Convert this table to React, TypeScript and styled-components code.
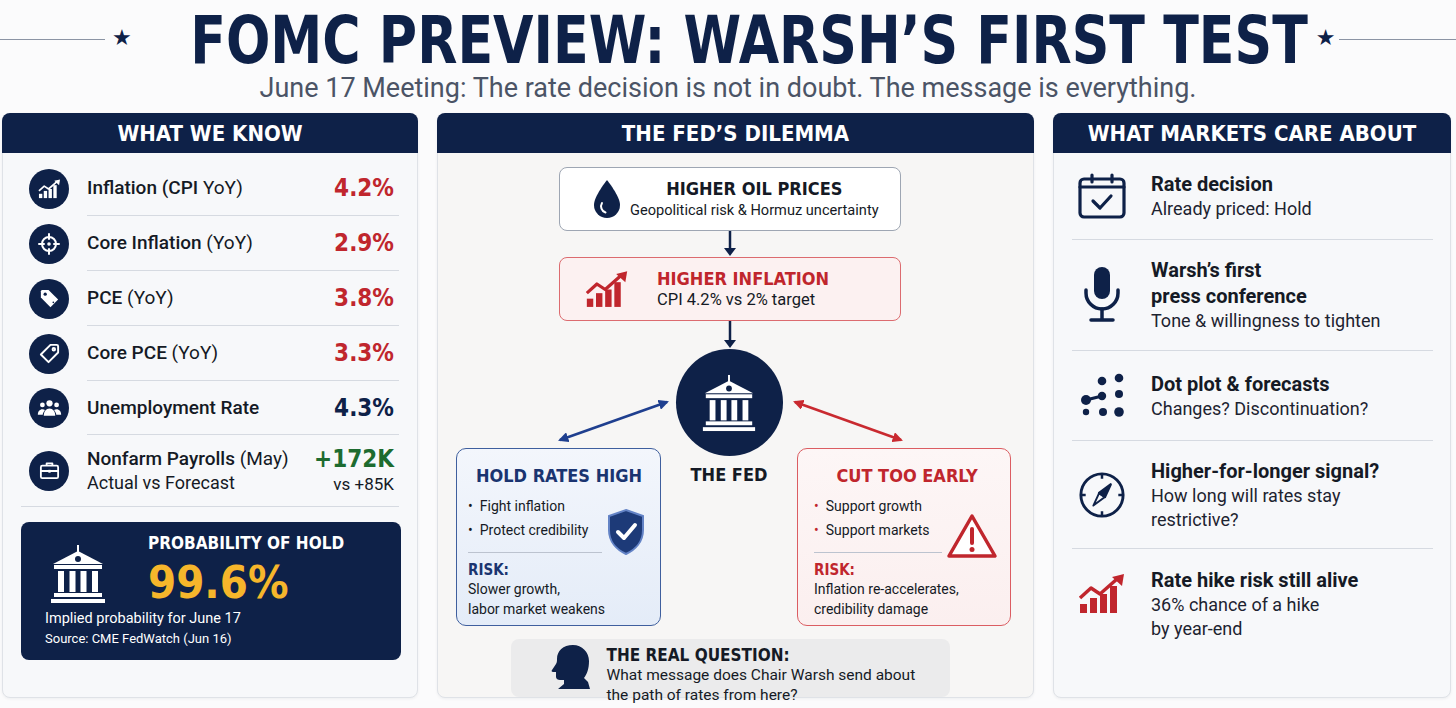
import React from "react";
import styled, { createGlobalStyle } from "styled-components";

const NAVY = "#0e2148";
const RED = "#c0262d";
const GREEN = "#1d6b2f";
const YELLOW = "#f6b62b";
const INK = "#151a25";
const LINE = "#d6dae1";
const HEAD = `"DejaVu Sans Condensed", "DejaVu Sans", sans-serif`;

const GlobalStyle = createGlobalStyle`
    html, body { margin: 0; padding: 0; background: #fbfbfc; }
    #root { width: 1456px; height: 708px; overflow: hidden; }
    * { box-sizing: border-box; }
`;

const Page = styled.div`
    width: 1456px;
    height: 708px;
    display: flex;
    flex-direction: column;
    font-family: Roboto, "Noto Sans", sans-serif;
    color: ${INK};
`;

/* ---------- masthead ---------- */

const Masthead = styled.header`
    height: 75px;
    display: flex;
    align-items: center;
`;

const Rule = styled.div<{ $w?: number }>`
    height: 1.5px;
    background: #8b94a4;
    ${({ $w }) => ($w ? `width: ${$w}px;` : "flex: 1;")}
    margin-top: 4px;
`;

const Star = styled.span<{ $gap: number }>`
    color: ${NAVY};
    font-family: "DejaVu Sans", sans-serif;
    font-size: 22px;
    line-height: 1;
    margin: 0 ${({ $gap }) => $gap}px 0 7px;
`;

const TitleBox = styled.div`
    width: 1120px;
    display: flex;
    justify-content: center;
    padding-top: 7px;
`;

const Title = styled.h1`
    margin: 0;
    font-family: ${HEAD};
    font-weight: 700;
    font-size: 66px;
    line-height: 1;
    color: ${NAVY};
    white-space: nowrap;
    transform: scaleX(0.88);
`;

const Subtitle = styled.p`
    margin: 0;
    text-align: center;
    font-size: 27px;
    line-height: 26px;
    color: #4b5466;
`;

/* ---------- panels ---------- */

const Columns = styled.main`
    margin-top: 12px;
    padding-left: 2px;
    display: grid;
    grid-template-columns: 416px 597px 398px;
    column-gap: 19px;
    height: 582px;
`;

const Panel = styled.section<{ $bg: string }>`
    border: 1px solid #dfe2e7;
    border-radius: 8px;
    background: ${({ $bg }) => $bg};
    display: flex;
    flex-direction: column;
    box-shadow: 0 1px 3px rgba(20, 30, 50, 0.06);
`;

const PanelHeader = styled.h2`
    margin: -1px -1px 0;
    height: 40px;
    border-radius: 8px 8px 0 0;
    background: ${NAVY};
    color: #fff;
    font-family: ${HEAD};
    font-weight: 700;
    font-size: 22px;
    display: flex;
    align-items: center;
    justify-content: center;
    flex-shrink: 0;
`;

/* ---------- left: what we know ---------- */

const StatList = styled.div`
    padding: 8px 18px 0 26px;
    display: flex;
    flex-direction: column;
`;

const StatRow = styled.div`
    display: flex;
    align-items: center;
    gap: 18px;
`;

const Disc = styled.div`
    width: 40px;
    height: 40px;
    border-radius: 50%;
    background: ${NAVY};
    display: flex;
    align-items: center;
    justify-content: center;
    flex-shrink: 0;
`;

const StatBody = styled.div<{ $h: number; $ruled: boolean }>`
    flex: 1;
    height: ${({ $h }) => $h}px;
    display: flex;
    align-items: center;
    justify-content: space-between;
    padding-right: 5px;
    border-bottom: ${({ $ruled }) => ($ruled ? `1px solid ${LINE}` : "none")};
`;

const StatLabel = styled.div`
    font-size: 19px;
    font-weight: 500;
    line-height: 24px;
    span { font-weight: 400; }
`;

const StatNote = styled.div`
    font-size: 18px;
    line-height: 24px;
`;

const StatValue = styled.div<{ $c: string }>`
    font-family: ${HEAD};
    font-weight: 700;
    font-size: 24px;
    line-height: 26px;
    color: ${({ $c }) => $c};
    text-align: right;
`;

const ValueNote = styled.div`
    font-size: 17px;
    line-height: 24px;
    text-align: right;
`;

const FullDivider = styled.div`
    height: 1px;
    background: ${LINE};
    margin-left: -8px;
`;

const ProbBox = styled.div`
    margin: 15px -2px 0 -8px;
    height: 138px;
    border-radius: 8px;
    background: ${NAVY};
    color: #fff;
`;

const ProbTop = styled.div`
    display: flex;
    padding: 11px 0 0 27px;
    gap: 40px;
`;

const ProbIcon = styled.div`
    margin-top: 11px;
`;

const ProbTitle = styled.div`
    font-family: ${HEAD};
    font-weight: 700;
    font-size: 17px;
    line-height: 20px;
`;

const ProbFigure = styled.div`
    margin-top: 4px;
    font-family: ${HEAD};
    font-weight: 700;
    font-size: 45px;
    line-height: 52px;
    color: ${YELLOW};
`;

const ProbFoot = styled.div<{ $size: number }>`
    padding-left: 24px;
    font-size: ${({ $size }) => $size}px;
    line-height: 20px;
    &:first-of-type { margin-top: 3px; }
`;

/* ---------- middle: dilemma ---------- */

const Dilemma = styled.div`
    padding: 14px 11px 0 0;
    display: flex;
    flex-direction: column;
    align-items: center;
`;

const FlowBox = styled.div<{ $tone: "plain" | "alert" }>`
    width: 342px;
    height: 64px;
    border-radius: 8px;
    display: flex;
    align-items: center;
    border: 1.5px solid ${({ $tone }) => ($tone === "alert" ? "#dc6b6f" : "#9ea6b3")};
    background: ${({ $tone }) => ($tone === "alert" ? "#fcf1f1" : "#fff")};
    padding-left: ${({ $tone }) => ($tone === "alert" ? 25 : 32)}px;
    gap: ${({ $tone }) => ($tone === "alert" ? 28 : 8)}px;
`;

const FlowText = styled.div<{ $align: string }>`
    text-align: ${({ $align }) => $align};
`;

const FlowTitle = styled.div<{ $c: string }>`
    font-family: ${HEAD};
    font-weight: 700;
    font-size: 18px;
    line-height: 22px;
    color: ${({ $c }) => $c};
`;

const FlowSub = styled.div<{ $size: number }>`
    font-size: ${({ $size }) => $size}px;
    line-height: 20px;
`;

const FedRow = styled.div`
    position: relative;
    width: calc(100% + 11px);
    margin-right: -11px;
    display: grid;
    grid-template-columns: 205px 1fr 214px;
    padding: 0 22px 0 18px;
    align-items: start;
`;

const ArrowLayer = styled.svg`
    position: absolute;
    left: 0;
    top: 0;
    pointer-events: none;
`;

const FedCenter = styled.div`
    display: flex;
    flex-direction: column;
    align-items: center;
`;

const FedSeal = styled.div`
    width: 107px;
    height: 107px;
    border-radius: 50%;
    background: ${NAVY};
    display: flex;
    align-items: center;
    justify-content: center;
`;

const FedLabel = styled.div`
    margin-top: 9px;
    font-family: ${HEAD};
    font-weight: 700;
    font-size: 18px;
    line-height: 20px;
    color: ${INK};
`;

const Scenario = styled.div<{ $tone: "hold" | "cut" }>`
    margin-top: 99px;
    height: 178px;
    border-radius: 10px;
    border: 1.5px solid ${({ $tone }) => ($tone === "hold" ? "#3f5f9e" : "#db5d62")};
    background: ${({ $tone }) =>
        $tone === "hold" ? "linear-gradient(180deg, #f3f6fc, #e4ecf8)" : "linear-gradient(180deg, #fdf6f6, #fbefef)"};
    padding: 16px 10px 0 ${({ $tone }) => ($tone === "hold" ? 11 : 16)}px;
`;

const ScenarioTitle = styled.div<{ $c: string }>`
    font-family: ${HEAD};
    font-weight: 700;
    font-size: 18px;
    line-height: 22px;
    text-align: center;
    color: ${({ $c }) => $c};
`;

const ScenarioGrid = styled.div<{ $icon: number }>`
    margin-top: 7px;
    display: grid;
    grid-template-columns: 1fr ${({ $icon }) => $icon}px;
    column-gap: 4px;
`;

const Bullets = styled.ul`
    margin: 0;
    padding: 0;
    list-style: none;
    grid-column: 1;
`;

const Bullet = styled.li<{ $dot: string }>`
    font-size: 14px;
    line-height: 24px;
    &::before {
        content: "•";
        color: ${({ $dot }) => $dot};
        margin-right: 7px;
    }
`;

const ScenarioRule = styled.div`
    grid-column: 1;
    height: 1px;
    background: #bcc3cf;
    margin: 10px 0 8px;
`;

const RiskLabel = styled.div<{ $c: string }>`
    grid-column: 1;
    font-family: ${HEAD};
    font-weight: 700;
    font-size: 15px;
    line-height: 18px;
    color: ${({ $c }) => $c};
`;

const RiskText = styled.div`
    grid-column: 1 / 3;
    font-size: 14px;
    line-height: 20px;
`;

const ScenarioIcon = styled.div<{ $top: number }>`
    grid-column: 2;
    grid-row: 1 / span 3;
    align-self: start;
    margin-top: ${({ $top }) => $top}px;
`;

const Question = styled.div`
    margin-top: 13px;
    width: 439px;
    height: 58px;
    border-radius: 8px;
    background: #ebebec;
    display: flex;
    align-items: flex-start;
    padding-left: 37px;
    gap: 15px;
`;

const QuestionHead = styled.div`
    margin-top: 5px;
`;

const QuestionText = styled.div`
    padding-top: 6px;
`;

const QuestionTitle = styled.div`
    font-family: ${HEAD};
    font-weight: 700;
    font-size: 17px;
    line-height: 20px;
`;

const QuestionBody = styled.div`
    font-size: 15.5px;
    line-height: 20px;
`;

/* ---------- right: markets ---------- */

const MarketList = styled.div`
    padding: 0 17px 0 18px;
    display: flex;
    flex-direction: column;
`;

const MarketItem = styled.div<{ $h?: number }>`
    display: flex;
    gap: 25px;
    padding-left: 6px;
    ${({ $h }) =>
        $h
            ? `height: ${$h}px; align-items: center; border-bottom: 1px solid ${LINE};`
            : "align-items: flex-start; padding-top: 18px;"}
`;

const MarketIcon = styled.div<{ $top?: number }>`
    width: 48px;
    display: flex;
    justify-content: center;
    flex-shrink: 0;
    margin-top: ${({ $top }) => $top || 0}px;
`;

const MarketTitle = styled.div`
    font-size: 20px;
    font-weight: 700;
    line-height: 26px;
`;

const MarketSub = styled.div`
    font-size: 18px;
    line-height: 24px;
    color: #1d2330;
`;

/* ---------- drawings ---------- */

const ChartIcon = ({ color, w, h }: { color: string; w: number; h: number }) => (
    <svg width={w} height={h} viewBox="0 0 48 40">
        <rect x="2" y="30" width="7" height="9" fill={color} />
        <rect x="12" y="24" width="7" height="15" fill={color} />
        <rect x="22" y="20" width="7" height="19" fill={color} />
        <rect x="32" y="12" width="7" height="27" fill={color} />
        <polyline points="2,24 13,14 22,20 39,5" fill="none" stroke={color} strokeWidth="3.5" strokeLinejoin="round" />
        <polygon points="46,0 44,12 34,3" fill={color} />
    </svg>
);

const BankIcon = ({ size, hole }: { size: number; hole: string }) => (
    <svg width={size} height={size} viewBox="0 0 60 60">
        <rect x="29" y="1" width="2" height="7" fill="#fff" />
        <polygon points="30,7 5,20 55,20" fill="#fff" />
        <circle cx="30" cy="15" r="3" fill={hole} />
        <rect x="6" y="21" width="48" height="4" fill="#fff" />
        <rect x="10" y="27" width="6" height="21" fill="#fff" />
        <rect x="21.5" y="27" width="6" height="21" fill="#fff" />
        <rect x="32.5" y="27" width="6" height="21" fill="#fff" />
        <rect x="44" y="27" width="6" height="21" fill="#fff" />
        <rect x="6" y="49" width="48" height="4" fill="#fff" />
        <rect x="3" y="55" width="54" height="4" fill="#fff" />
    </svg>
);

const CrossIcon = () => (
    <svg width="24" height="24" viewBox="0 0 24 24" fill="none" stroke="#fff" strokeWidth="2" strokeLinecap="round">
        <circle cx="12" cy="12" r="7" />
        <path d="M12 2v5M12 17v5M2 12h5M17 12h5" />
        <circle cx="12" cy="12" r="0.8" fill="#fff" />
    </svg>
);

const TagFilledIcon = () => (
    <svg width="23" height="23" viewBox="0 0 24 24">
        <path d="M3 4.5C3 3.7 3.7 3 4.5 3H11L21 13L13 21L3 11Z" fill="#fff" />
        <circle cx="7.5" cy="7.5" r="1.7" fill={NAVY} />
        <circle cx="16" cy="16" r="0.9" fill={NAVY} />
    </svg>
);

const TagOutlineIcon = () => (
    <svg width="23" height="23" viewBox="0 0 24 24" fill="none" stroke="#fff" strokeWidth="2" strokeLinejoin="round">
        <path d="M21 4.5V11L11 21L3 13L13 3H19.5C20.3 3 21 3.7 21 4.5Z" />
        <circle cx="16.5" cy="7.5" r="1.3" />
    </svg>
);

const PeopleIcon = () => (
    <svg width="25" height="25" viewBox="0 0 24 24" fill="#fff">
        <circle cx="12" cy="7" r="3" />
        <path d="M6.5 19C6.5 14.8 8.8 12 12 12S17.5 14.8 17.5 19Z" />
        <circle cx="5.2" cy="8.6" r="2.3" />
        <path d="M0.8 18C0.8 15 2.6 12.8 5.2 12.8C6.2 12.8 7 13.1 7.6 13.5C6.4 15 5.6 16.6 5.5 18Z" />
        <circle cx="18.8" cy="8.6" r="2.3" />
        <path d="M23.2 18C23.2 15 21.4 12.8 18.8 12.8C17.8 12.8 17 13.1 16.4 13.5C17.6 15 18.4 16.6 18.5 18Z" />
    </svg>
);

const CaseIcon = () => (
    <svg width="23" height="23" viewBox="0 0 24 24" fill="none" stroke="#fff" strokeWidth="1.9" strokeLinejoin="round">
        <rect x="3" y="7" width="18" height="13" rx="1.5" />
        <path d="M9 7V4.5H15V7M3 12.5H21" />
        <rect x="10.8" y="11.3" width="2.4" height="3" fill="#fff" stroke="none" />
    </svg>
);

const DropIcon = () => (
    <svg width="30" height="40" viewBox="0 0 30 40">
        <path d="M15 1C15 1 2 17 2 26A13 13 0 0 0 28 26C28 17 15 1 15 1Z" fill={NAVY} />
        <path d="M10 24A6.5 6.5 0 0 0 13.5 33.5" fill="none" stroke="#fff" strokeWidth="2" strokeLinecap="round" />
    </svg>
);

const DownArrow = ({ h }: { h: number }) => (
    <svg width="14" height={h} viewBox={`0 0 14 ${h}`}>
        <line x1="7" y1="0" x2="7" y2={h - 7} stroke={NAVY} strokeWidth="2.5" />
        <polygon points={`1,${h - 9} 13,${h - 9} 7,${h - 1}`} fill={NAVY} />
    </svg>
);

const ShieldIcon = () => (
    <svg width="40" height="48" viewBox="0 0 40 48">
        <path d="M20 2L37 8V22C37 34 29 42 20 46C11 42 3 34 3 22V8Z" fill="#1d3a78" stroke="#6383c6" strokeWidth="2" />
        <polyline points="12,24 18,30 29,17" fill="none" stroke="#fff" strokeWidth="4" strokeLinecap="round" strokeLinejoin="round" />
    </svg>
);

const WarnIcon = () => (
    <svg width="52" height="46" viewBox="0 0 52 46">
        <path d="M26 3L49 43H3Z" fill="#fff" stroke={RED} strokeWidth="3.5" strokeLinejoin="round" />
        <line x1="26" y1="16" x2="26" y2="30" stroke={RED} strokeWidth="4" strokeLinecap="round" />
        <circle cx="26" cy="36.5" r="2.5" fill={RED} />
    </svg>
);

const HeadIcon = () => (
    <svg width="44" height="46" viewBox="0 0 44 46">
        <path
            d="M25 1C15 1 9 7 9 15C9 17 9 18 8 20L4 26C3 27 4 28 5 28L8 28L8 33C8 35 10 36 12 36L16 36L16 40L10 45H42L40 38L36 34C39 30 41 25 41 17C41 8 34 1 25 1Z"
            fill={NAVY}
        />
    </svg>
);

const CalendarIcon = () => (
    <svg width="48" height="46" viewBox="0 0 48 46" fill="none" stroke={NAVY} strokeWidth="3.2" strokeLinecap="round" strokeLinejoin="round">
        <rect x="2" y="6" width="44" height="38" rx="4" />
        <path d="M2 14H46" />
        <path d="M14 2V9M34 2V9" />
        <polyline points="15,28 22,35 33,23" />
    </svg>
);

const MicIcon = () => (
    <svg width="40" height="58" viewBox="0 0 40 58" fill="none" stroke={NAVY} strokeWidth="3.5" strokeLinecap="round">
        <rect x="12" y="1" width="16" height="32" rx="8" fill={NAVY} stroke="none" />
        <path d="M4 24V27A16 16 0 0 0 36 27V24" />
        <path d="M20 43V53M9 54H31" />
    </svg>
);

const DotsIcon = () => (
    <svg width="48" height="46" viewBox="0 0 48 46" fill={NAVY}>
        <line x1="8" y1="27" x2="24" y2="23" stroke={NAVY} strokeWidth="3" />
        <circle cx="24" cy="8" r="4.3" />
        <circle cx="41" cy="5" r="4.3" />
        <circle cx="41" cy="21" r="4" />
        <circle cx="41" cy="39" r="4.8" />
        <circle cx="25" cy="39" r="4" />
        <circle cx="8" cy="39" r="3.2" />
        <circle cx="8" cy="27" r="5" />
        <circle cx="24" cy="23" r="4.2" />
    </svg>
);

const CompassIcon = () => (
    <svg width="50" height="50" viewBox="0 0 50 50" fill="none" stroke={NAVY} strokeWidth="2.6" strokeLinejoin="round">
        <circle cx="25" cy="25" r="22" strokeWidth="3" />
        <path d="M25 3V8M25 42V47M3 25H8M42 25H47" />
        <polygon points="34,14 28,27 22,23" fill={NAVY} />
        <polygon points="28,27 16,36 22,23" strokeWidth="2" />
    </svg>
);

/* ---------- data ---------- */

const stats = [
    { icon: <ChartIcon color="#fff" w={23} h={20} />, label: "Inflation (CPI", note: " YoY)", value: "4.2%", color: RED },
    { icon: <CrossIcon />, label: "Core Inflation", note: " (YoY)", value: "2.9%", color: RED },
    { icon: <TagFilledIcon />, label: "PCE", note: " (YoY)", value: "3.8%", color: RED },
    { icon: <TagOutlineIcon />, label: "Core PCE", note: " (YoY)", value: "3.3%", color: RED },
    { icon: <PeopleIcon />, label: "Unemployment Rate", note: "", value: "4.3%", color: NAVY },
];

const rowHeights = [55, 55, 55, 55, 54];

const markets = [
    { icon: <CalendarIcon />, title: ["Rate decision"], sub: ["Already priced: Hold"], h: 87 },
    { icon: <MicIcon />, title: ["Warsh’s first", "press conference"], sub: ["Tone & willingness to tighten"], h: 111 },
    { icon: <DotsIcon />, title: ["Dot plot & forecasts"], sub: ["Changes? Discontinuation?"], h: 90 },
    { icon: <CompassIcon />, title: ["Higher-for-longer signal?"], sub: ["How long will rates stay", "restrictive?"], h: 108 },
];

export default function App() {
    return (
        <Page>
            <GlobalStyle />
            <Masthead>
                <Rule $w={105} />
                <Star $gap={57}>★</Star>
                <TitleBox>
                    <Title>FOMC PREVIEW: WARSH’S FIRST TEST</Title>
                </TitleBox>
                <Star $gap={4}>★</Star>
                <Rule />
            </Masthead>
            <Subtitle>June 17 Meeting: The rate decision is not in doubt. The message is everything.</Subtitle>

            <Columns>
                <Panel $bg="#f7f8fa">
                    <PanelHeader>WHAT WE KNOW</PanelHeader>
                    <StatList>
                        {stats.map((s, i) => (
                            <StatRow key={s.label}>
                                <Disc>{s.icon}</Disc>
                                <StatBody $h={rowHeights[i]} $ruled={true}>
                                    <StatLabel>
                                        {s.label}
                                        <span>{s.note}</span>
                                    </StatLabel>
                                    <StatValue $c={s.color}>{s.value}</StatValue>
                                </StatBody>
                            </StatRow>
                        ))}
                        <StatRow>
                            <Disc>
                                <CaseIcon />
                            </Disc>
                            <StatBody $h={71} $ruled={false}>
                                <div>
                                    <StatLabel>
                                        Nonfarm Payrolls<span> (May)</span>
                                    </StatLabel>
                                    <StatNote>Actual vs Forecast</StatNote>
                                </div>
                                <div>
                                    <StatValue $c={GREEN}>+172K</StatValue>
                                    <ValueNote>vs +85K</ValueNote>
                                </div>
                            </StatBody>
                        </StatRow>
                        <FullDivider />
                        <ProbBox>
                            <ProbTop>
                                <ProbIcon>
                                    <BankIcon size={60} hole={NAVY} />
                                </ProbIcon>
                                <div>
                                    <ProbTitle>PROBABILITY OF HOLD</ProbTitle>
                                    <ProbFigure>99.6%</ProbFigure>
                                </div>
                            </ProbTop>
                            <ProbFoot $size={14.5}>Implied probability for June 17</ProbFoot>
                            <ProbFoot $size={13}>Source: CME FedWatch (Jun 16)</ProbFoot>
                        </ProbBox>
                    </StatList>
                </Panel>

                <Panel $bg="#f7f6f5">
                    <PanelHeader>THE FED’S DILEMMA</PanelHeader>
                    <Dilemma>
                        <FlowBox $tone="plain">
                            <DropIcon />
                            <FlowText $align="center">
                                <FlowTitle $c={INK}>HIGHER OIL PRICES</FlowTitle>
                                <FlowSub $size={14.6}>Geopolitical risk & Hormuz uncertainty</FlowSub>
                            </FlowText>
                        </FlowBox>
                        <DownArrow h={26} />
                        <FlowBox $tone="alert">
                            <ChartIcon color={RED} w={44} h={37} />
                            <FlowText $align="left">
                                <FlowTitle $c={RED}>HIGHER INFLATION</FlowTitle>
                                <FlowSub $size={16.5}>CPI 4.2% vs 2% target</FlowSub>
                            </FlowText>
                        </FlowBox>
                        <DownArrow h={28} />

                        <FedRow>
                            <ArrowLayer width="595" height="110" viewBox="0 0 595 110">
                                <defs>
                                    <marker id="hb" viewBox="0 0 10 10" refX="8" refY="5" markerWidth="4" markerHeight="4" orient="auto-start-reverse">
                                        <path d="M0 0L10 5L0 10Z" fill="#1f3f8f" />
                                    </marker>
                                    <marker id="hr" viewBox="0 0 10 10" refX="8" refY="5" markerWidth="4" markerHeight="4" orient="auto-start-reverse">
                                        <path d="M0 0L10 5L0 10Z" fill="#c92a30" />
                                    </marker>
                                </defs>
                                <line x1="122" y1="91" x2="229" y2="53" stroke="#1f3f8f" strokeWidth="2.6" markerStart="url(#hb)" markerEnd="url(#hb)" />
                                <line x1="357" y1="53" x2="463" y2="91" stroke="#c92a30" strokeWidth="2.6" markerStart="url(#hr)" markerEnd="url(#hr)" />
                            </ArrowLayer>

                            <Scenario $tone="hold">
                                <ScenarioTitle $c="#1a3470">HOLD RATES HIGH</ScenarioTitle>
                                <ScenarioGrid $icon={44}>
                                    <Bullets>
                                        <Bullet $dot={INK}>Fight inflation</Bullet>
                                        <Bullet $dot={INK}>Protect credibility</Bullet>
                                    </Bullets>
                                    <ScenarioRule />
                                    <RiskLabel $c="#1a3470">RISK:</RiskLabel>
                                    <RiskText>
                                        Slower growth,
                                        <br />
                                        labor market weakens
                                    </RiskText>
                                    <ScenarioIcon $top={14}>
                                        <ShieldIcon />
                                    </ScenarioIcon>
                                </ScenarioGrid>
                            </Scenario>

                            <FedCenter>
                                <FedSeal>
                                    <BankIcon size={58} hole={NAVY} />
                                </FedSeal>
                                <FedLabel>THE FED</FedLabel>
                            </FedCenter>

                            <Scenario $tone="cut">
                                <ScenarioTitle $c={RED}>CUT TOO EARLY</ScenarioTitle>
                                <ScenarioGrid $icon={54}>
                                    <Bullets>
                                        <Bullet $dot={RED}>Support growth</Bullet>
                                        <Bullet $dot={RED}>Support markets</Bullet>
                                    </Bullets>
                                    <ScenarioRule />
                                    <RiskLabel $c={RED}>RISK:</RiskLabel>
                                    <RiskText>
                                        Inflation re-accelerates,
                                        <br />
                                        credibility damage
                                    </RiskText>
                                    <ScenarioIcon $top={19}>
                                        <WarnIcon />
                                    </ScenarioIcon>
                                </ScenarioGrid>
                            </Scenario>
                        </FedRow>

                        <Question>
                            <QuestionHead>
                                <HeadIcon />
                            </QuestionHead>
                            <QuestionText>
                                <QuestionTitle>THE REAL QUESTION:</QuestionTitle>
                                <QuestionBody>
                                    What message does Chair Warsh send about
                                    <br />
                                    the path of rates from here?
                                </QuestionBody>
                            </QuestionText>
                        </Question>
                    </Dilemma>
                </Panel>

                <Panel $bg="#f7f8fa">
                    <PanelHeader>WHAT MARKETS CARE ABOUT</PanelHeader>
                    <MarketList>
                        {markets.map((m) => (
                            <MarketItem key={m.title[0]} $h={m.h}>
                                <MarketIcon>{m.icon}</MarketIcon>
                                <div>
                                    {m.title.map((t) => (
                                        <MarketTitle key={t}>{t}</MarketTitle>
                                    ))}
                                    {m.sub.map((t) => (
                                        <MarketSub key={t}>{t}</MarketSub>
                                    ))}
                                </div>
                            </MarketItem>
                        ))}
                        <MarketItem>
                            <MarketIcon $top={6}>
                                <ChartIcon color={RED} w={48} h={42} />
                            </MarketIcon>
                            <div>
                                <MarketTitle>Rate hike risk still alive</MarketTitle>
                                <MarketSub>36% chance of a hike</MarketSub>
                                <MarketSub>by year-end</MarketSub>
                            </div>
                        </MarketItem>
                    </MarketList>
                </Panel>
            </Columns>
        </Page>
    );
}
